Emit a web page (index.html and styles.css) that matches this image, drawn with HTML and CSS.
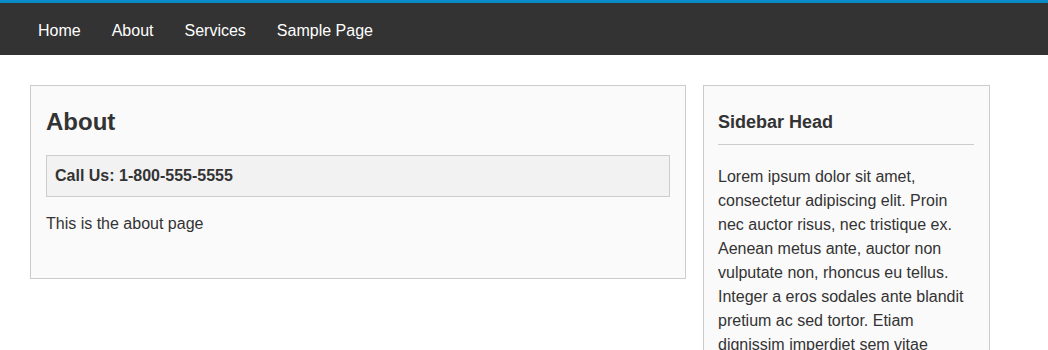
FILE: index.html
```html
<!DOCTYPE html>
<html lang="en">
<head>
    <meta charset="UTF-8">
    <meta name="viewport" content="width=device-width, initial-scale=1.0">
    <title>About</title>
    <link rel="stylesheet" href="styles.css">
</head>
<body>
    <header class="site-header">
        <nav class="main-nav">
            <a href="#">Home</a>
            <a href="#">About</a>
            <a href="#">Services</a>
            <a href="#">Sample Page</a>
        </nav>
    </header>
    <div class="page">
        <main class="content-box">
            <h1>About</h1>
            <div class="callout">Call Us: 1-800-555-5555</div>
            <p>This is the about page</p>
        </main>
        <aside class="sidebar">
            <h3>Sidebar Head</h3>
            <p>Lorem ipsum dolor sit amet, consectetur adipiscing elit. Proin nec auctor risus, nec tristique ex. Aenean metus ante, auctor non vulputate non, rhoncus eu tellus. Integer a eros sodales ante blandit pretium ac sed tortor. Etiam dignissim imperdiet sem vitae tincidunt. Nullam at lacus eu nisi ultrices pretium.</p>
        </aside>
    </div>
</body>
</html>
```

FILE: styles.css
```css
body {
    margin: 0;
    font-family: "Liberation Sans", Arial, sans-serif;
    font-size: 16px;
    color: #333;
    background: #fff;
}
.site-header {
    background: #333;
    border-top: 3px solid #0a8ac7;
}
.main-nav {
    display: flex;
    height: 52px;
    box-sizing: border-box;
    align-items: center;
    padding: 4px 0 0 22.5px;
}
.main-nav a {
    color: #fff;
    text-decoration: none;
    padding: 0 15.5px;
    line-height: 20px;
}
.page {
    display: flex;
    align-items: flex-start;
    gap: 17px;
    padding: 30px 30px 0;
}
.content-box {
    width: 656px;
    flex-shrink: 0;
    box-sizing: border-box;
    background: #fafafa;
    border: 1px solid #ccc;
    padding: 22px 15px 32px;
}
.content-box h1 {
    margin: 0 0 19px;
    font-size: 24px;
    line-height: 28px;
}
.callout {
    background: #f2f2f2;
    border: 1px solid #ccc;
    padding: 10px 8px;
    font-weight: bold;
    line-height: 20px;
}
.content-box p {
    margin: 15px 0 10px;
    line-height: 24px;
}
.sidebar {
    width: 287px;
    flex-shrink: 0;
    box-sizing: border-box;
    background: #fafafa;
    border: 1px solid #ccc;
    padding: 26px 15px 15px 14px;
}
.sidebar h3 {
    margin: 0;
    padding-bottom: 11px;
    border-bottom: 1px solid #ccc;
    font-size: 18px;
    line-height: 21px;
}
.sidebar p {
    margin: 20px 0 0;
    line-height: 24px;
}
```
